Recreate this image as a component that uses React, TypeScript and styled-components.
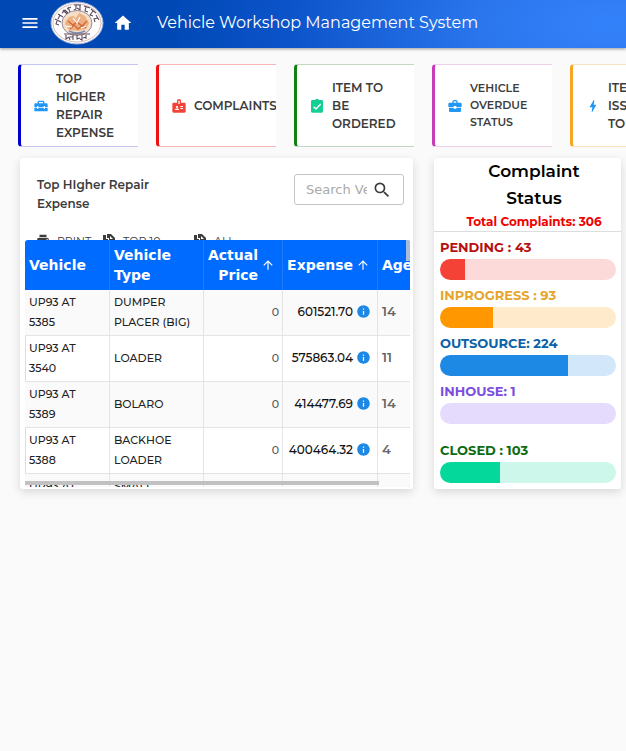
import React from 'react';
import styled, { createGlobalStyle } from 'styled-components';
import { MdMenu, MdHome, MdSearch, MdArrowUpward, MdInfo, MdPrint, MdBolt, MdBusinessCenter, MdBadge } from 'react-icons/md';

const Global = createGlobalStyle`
  * { box-sizing: border-box; }
  body { margin: 0; background: #fafafa; color: #3c3c3c; font-family: Montserrat, Inter, "Open Sans", sans-serif; }
  button { font: inherit; color: inherit; border: 0; background: none; padding: 0; }
  p, h1, h2 { margin: 0; }
`;

const TopBar = styled.header`
  display: flex;
  align-items: center;
  height: 48px;
  padding: 0 0 2px 20px;
  color: #fff;
  background: radial-gradient(ellipse 380px 180px at 97% 50%, #3482fb 0%, #2a75ec 35%, #0b53c9 85%, #0049b5 115%);
  box-shadow: 0 1px 3px rgba(0, 0, 0, 0.4);
`;
const IconButton = styled.button`
  display: flex;
  font-size: 20px;
`;
const Crest = styled.svg`
  width: 54px;
  height: 44px;
  margin: 0 9px 0 10px;
`;
const AppTitle = styled.h1`
  margin-left: 24px;
  font-size: 16px;
  font-weight: 400;
  line-height: 24px;
  white-space: nowrap;
`;

const Shortcuts = styled.nav`
  display: flex;
  gap: 18px;
  padding: 16px 0 0 18px;
  overflow: hidden;
`;
const Shortcut = styled.a<{ $edge: string; $rim: string }>`
  flex: 0 0 120px;
  height: 83px;
  display: flex;
  align-items: center;
  gap: 7px;
  padding-left: 12px;
  overflow: hidden;
  color: #3c3c3c;
  text-decoration: none;
  background: #fff;
  border: solid ${p => p.$rim};
  border-width: 1px 0;
  border-left: 3px solid ${p => p.$edge};
  border-radius: 4px 0 0 4px;
  svg { flex: none; }
`;
const ShortcutLabel = styled.span<{ $small?: boolean }>`
  font-size: ${p => (p.$small ? 11 : 12)}px;
  font-weight: 600;
  line-height: ${p => (p.$small ? 17 : 18)}px;
  white-space: pre;
`;

const Main = styled.main`
  display: grid;
  grid-template-columns: minmax(0, 393fr) minmax(0, 187fr);
  gap: 21px;
  padding: 11px 5px 24px 20px;
`;
const Card = styled.section`
  background: #fff;
  border-radius: 3px;
  box-shadow: 0 3px 10px rgba(0, 0, 0, 0.14);
`;
const ExpenseCard = styled(Card)`
  height: 331px;
  padding: 16px 3px 0 5px;
`;
const CardHead = styled.div`
  display: flex;
  justify-content: space-between;
  height: 59px;
  padding: 0 6px 0 12px;
`;
const CardTitle = styled.h2`
  width: 130px;
  padding-top: 1px;
  font-size: 12px;
  font-weight: 600;
  line-height: 19px;
`;
const SearchBox = styled.label`
  display: flex;
  align-items: center;
  width: 110px;
  height: 31px;
  padding: 0 11px;
  border: 1px solid #c4c4c4;
  border-radius: 3px;
  font-size: 20px;
  input {
    flex: 1;
    min-width: 0;
    margin-right: 5px;
    padding: 0;
    border: 0;
    outline: 0;
    font: 13px "DejaVu Sans", sans-serif;
  }
  input::placeholder { color: #a9a9a9; }
  svg { flex: none; }
`;
const Tools = styled.div`
  display: flex;
  height: 7px;
  padding-left: 11px;
  overflow: hidden;
`;
const Tool = styled.button<{ $width: number }>`
  display: flex;
  align-items: flex-start;
  gap: 7px;
  width: ${p => p.$width}px;
  font-size: 11px;
  line-height: 17px;
  white-space: nowrap;
  svg { flex: none; font-size: 14px; }
`;
const TableFrame = styled.div`
  height: 247px;
  overflow: hidden;
  position: relative;
  border-radius: 3px;
  box-shadow: inset 1px 0 #ddd, inset 0 -1px #ccc;
`;
const ScrollX = styled.div`
  position: absolute;
  left: 0;
  right: 0;
  bottom: 2px;
  height: 4px;
  background: linear-gradient(#c1c1c1, #c1c1c1) left / 92% 100% no-repeat;
`;
const ScrollY = styled.div`
  position: absolute;
  top: 0;
  right: 0;
  width: 4px;
  height: 21px;
  background: #a9bcd8;
`;
const Table = styled.table`
  table-layout: fixed;
  width: 436px;
  border-spacing: 0;
  th {
    height: 50px;
    padding: 0 3px 0 4px;
    text-align: left;
    color: #fff;
    background: #006bff;
    border-right: 1px solid #1f7cfb;
    font: bold 14px/20px "DejaVu Sans", sans-serif;
  }
  td {
    height: 46px;
    padding: 0 3px 2px 4px;
    color: #222;
    border-right: 1px solid #e4e4e4;
    border-bottom: 1px solid #e4e4e4;
    font-size: 11px;
    font-weight: 500;
    line-height: 20px;
    white-space: pre-line;
  }
  tbody tr:nth-child(odd) { background: #fafafa; }
`;
const HeadInner = styled.span`
  display: flex;
  align-items: center;
  justify-content: flex-end;
  gap: 3px;
  padding-right: 4px;
  text-align: right;
  svg { flex: none; font-size: 14px; }
`;
const Amount = styled.div`
  display: flex;
  align-items: center;
  justify-content: flex-end;
  gap: 3px;
  padding-right: 3px;
  color: #111;
  font-size: 12px;
  svg { flex: none; font-size: 15px; color: #1e88e5; }
`;
const Zero = styled.div`
  text-align: right;
  color: #555;
`;
const Age = styled.span`
  font-size: 13px;
  font-weight: 600;
  color: #666;
`;

const StatusCard = styled(Card)`
  height: 331px;
`;
const StatusHead = styled.div`
  height: 74px;
  padding-left: 13px;
  text-align: center;
  border-bottom: 1px solid #ddd;
`;
const StatusTitle = styled.h2`
  width: 110px;
  margin: 0 auto;
  color: #000;
  font-size: 17px;
  font-weight: 600;
  line-height: 27px;
`;
const Total = styled.p`
  color: #f00000;
  font-size: 12px;
  font-weight: 700;
  line-height: 19px;
  white-space: nowrap;
`;
const Group = styled.div<{ $color: string; $spaced?: boolean }>`
  padding: ${p => (p.$spaced ? 17 : 6)}px 5px 0 6px;
  label {
    display: block;
    margin-bottom: 2px;
    color: ${p => p.$color};
    font-size: 13px;
    font-weight: 700;
    line-height: 19px;
  }
`;
const Meter = styled.progress<{ $fill: string; $track: string }>`
  appearance: none;
  display: block;
  width: 100%;
  height: 21px;
  border: 0;
  border-radius: 11px;
  overflow: hidden;
  background: ${p => p.$track};
  &::-webkit-progress-bar { background: ${p => p.$track}; }
  &::-webkit-progress-value { background: ${p => p.$fill}; }
`;

const rows = [
  ['UP93 AT\n5385', 'DUMPER\nPLACER (BIG)', '601521.70', '14'],
  ['UP93 AT\n3540', 'LOADER', '575863.04', '11'],
  ['UP93 AT\n5389', 'BOLARO', '414477.69', '14'],
  ['UP93 AT\n5388', 'BACKHOE\nLOADER', '400464.32', '4'],
  ['UP93 AT\n5391', 'SMALL\nLOADER', '389120.50', '12'],
];

const statuses = [
  { id: 'pending', text: 'PENDING : 43', value: 14, color: '#b71010', fill: '#f44336', track: '#fddada' },
  { id: 'progress', text: 'INPROGRESS : 93', value: 30, color: '#e6a52c', fill: '#ff9800', track: '#ffeacc' },
  { id: 'outsource', text: 'OUTSOURCE: 224', value: 73, color: '#0b62a8', fill: '#1e88e5', track: '#d2e7fa' },
  { id: 'inhouse', text: 'INHOUSE: 1', value: 0, color: '#7c4ddf', fill: '#7c4ddf', track: '#e4dbfd' },
  { id: 'closed', text: 'CLOSED : 103', value: 34, color: '#0b6b12', fill: '#05d89b', track: '#cdf7eb' },
];

const Emblem = () => (
  <Crest viewBox="0 0 54 44" role="img" aria-label="Municipal emblem">
    <ellipse cx="27" cy="22" rx="26" ry="21" fill="#fff" stroke="#9bb0d4" />
    <ellipse cx="27" cy="22" rx="24" ry="19" fill="none" stroke="#b98a8a" strokeWidth=".6" />
    <ellipse cx="27" cy="22" rx="15" ry="12.5" fill="#f3dfc8" stroke="#80728a" strokeWidth=".8" />
    <path d="M15 23q2-8 8-8l3 2 3-5 6 3 4 7-3 6-8 2-9-1z" fill="#eeb083" />
    <path d="M18 20l5 4 4-3 5 4 5-5M20 28l4-4 4 4 5-4 3 3" fill="none" stroke="#d06a3a" strokeWidth="1.4" />
    <path d="M23 17l4 5 3-6M16 25l6 1M31 27l5-2" fill="none" stroke="#fff" strokeWidth="1.2" />
    <path d="M19 30q8 4 16 0" fill="none" stroke="#798ab8" strokeWidth="1.4" />
    <g fill="none" stroke="#5d4a5c" strokeWidth="1.1">
      <path d="M5 18l6 3M7 20l-1 3 3 1M8 13l5 3M10 14l-2 4M13 9l4 4M12 12l3-3 3 3M18 6l2 5M17 8l4-2" />
      <path d="M24 4l7 0M26 4v4l-2 1M30 4v5l-3-2M34 5l6 2M36 6l-1 4 3 1M41 8l5 4M43 10l-3 4 3 1M46 14l3 5M48 17l-4 1 1 3" />
      <path d="M14 33l26 0M16 34v4l3-2 1 3M23 34v5M23 36l-3 0M27 34v4l3-1M32 34v5l-2-1M36 34v4M36 36l-3 1" />
    </g>
  </Crest>
);

const ToolboxIcon = () => (
  <svg width="16" height="16" viewBox="0 0 24 24" fill="#2196f3" aria-hidden="true">
    <path d="M18 16h-2v-1H8v1H6v-1H2v5h20v-5h-4v1ZM20 8h-3V6a2 2 0 0 0-2-2H9a2 2 0 0 0-2 2v2H4a2 2 0 0 0-2 2v4h4v-2h2v2h8v-2h2v2h4v-4a2 2 0 0 0-2-2Zm-5 0H9V6h6v2Z" />
  </svg>
);

const TaskIcon = () => (
  <svg width="16" height="16" viewBox="0 0 24 24" fill="#14cf93" aria-hidden="true">
    <path d="M19 3h-4.2a3 3 0 0 0-5.6 0H5a2 2 0 0 0-2 2v15a2 2 0 0 0 2 2h14a2 2 0 0 0 2-2V5a2 2 0 0 0-2-2Z" />
    <path d="m7 13 3.5 3.5L17.5 9" fill="none" stroke="#fff" strokeWidth="2" />
  </svg>
);

const ExportIcon = () => (
  <svg width="14" height="14" viewBox="0 0 14 14" fill="currentColor" aria-hidden="true">
    <path d="M1 2h3v4h2v7H2a1 1 0 0 1-1-1zM5 1h4l4 4v8H7V5H5zm3 2v3h3z" fillRule="evenodd" />
  </svg>
);

export default function App() {
  return (
    <>
      <Global />
      <TopBar>
        <IconButton aria-label="Open menu"><MdMenu /></IconButton>
        <Emblem />
        <IconButton aria-label="Home"><MdHome /></IconButton>
        <AppTitle>Vehicle Workshop Management System</AppTitle>
      </TopBar>
      <Shortcuts>
        <Shortcut href="#expense" $edge="#0000d0" $rim="#c5c5f5"><ToolboxIcon /><ShortcutLabel>{'TOP\nHIGHER\nREPAIR\nEXPENSE'}</ShortcutLabel></Shortcut>
        <Shortcut href="#complaints" $edge="#ee1010" $rim="#f7b5b5"><MdBadge size={16} color="#f44336" /><ShortcutLabel>COMPLAINTS</ShortcutLabel></Shortcut>
        <Shortcut href="#order" $edge="#128012" $rim="#c3d8c3"><TaskIcon /><ShortcutLabel>{'ITEM TO\nBE\nORDERED'}</ShortcutLabel></Shortcut>
        <Shortcut href="#overdue" $edge="#c83cb8" $rim="#ecd0e8"><MdBusinessCenter size={16} color="#2196f3" /><ShortcutLabel $small>{'VEHICLE\nOVERDUE\nSTATUS'}</ShortcutLabel></Shortcut>
        <Shortcut href="#issue" $edge="#f5a623" $rim="#f7e3bd"><MdBolt size={16} color="#2196f3" /><ShortcutLabel>{'ITEM\nISSUED\nTODAY'}</ShortcutLabel></Shortcut>
      </Shortcuts>
      <Main>
        <ExpenseCard id="expense">
          <CardHead>
            <CardTitle>Top HIgher Repair Expense</CardTitle>
            <SearchBox>
              <input type="text" placeholder="Search Vehicle" aria-label="Search Vehicle" />
              <MdSearch />
            </SearchBox>
          </CardHead>
          <Tools>
            <Tool $width={66}><MdPrint />PRINT</Tool>
            <Tool $width={91}><ExportIcon />TOP 10</Tool>
            <Tool $width={60}><ExportIcon />ALL</Tool>
          </Tools>
          <TableFrame>
            <Table>
              <colgroup><col width="85" /><col width="94" /><col width="79" /><col width="95" /><col width="83" /></colgroup>
              <thead>
                <tr>
                  <th>Vehicle</th>
                  <th>Vehicle Type</th>
                  <th><HeadInner>Actual Price<MdArrowUpward /></HeadInner></th>
                  <th><HeadInner>Expense<MdArrowUpward /></HeadInner></th>
                  <th>Age</th>
                </tr>
              </thead>
              <tbody>
                {rows.map(([vehicle, type, amount, age]) => (
                  <tr key={vehicle}>
                    <td>{vehicle}</td>
                    <td>{type}</td>
                    <td><Zero>0</Zero></td>
                    <td><Amount>{amount}<MdInfo /></Amount></td>
                    <td><Age>{age}</Age></td>
                  </tr>
                ))}
              </tbody>
            </Table>
            <ScrollX />
            <ScrollY />
          </TableFrame>
        </ExpenseCard>
        <StatusCard>
          <StatusHead>
            <StatusTitle>Complaint Status</StatusTitle>
            <Total>Total Complaints: 306</Total>
          </StatusHead>
          {statuses.map(s => (
            <Group key={s.id} $color={s.color} $spaced={s.id === 'closed'}>
              <label htmlFor={s.id}>{s.text}</label>
              <Meter id={s.id} max={100} value={s.value} $fill={s.fill} $track={s.track} />
            </Group>
          ))}
        </StatusCard>
      </Main>
    </>
  );
}
